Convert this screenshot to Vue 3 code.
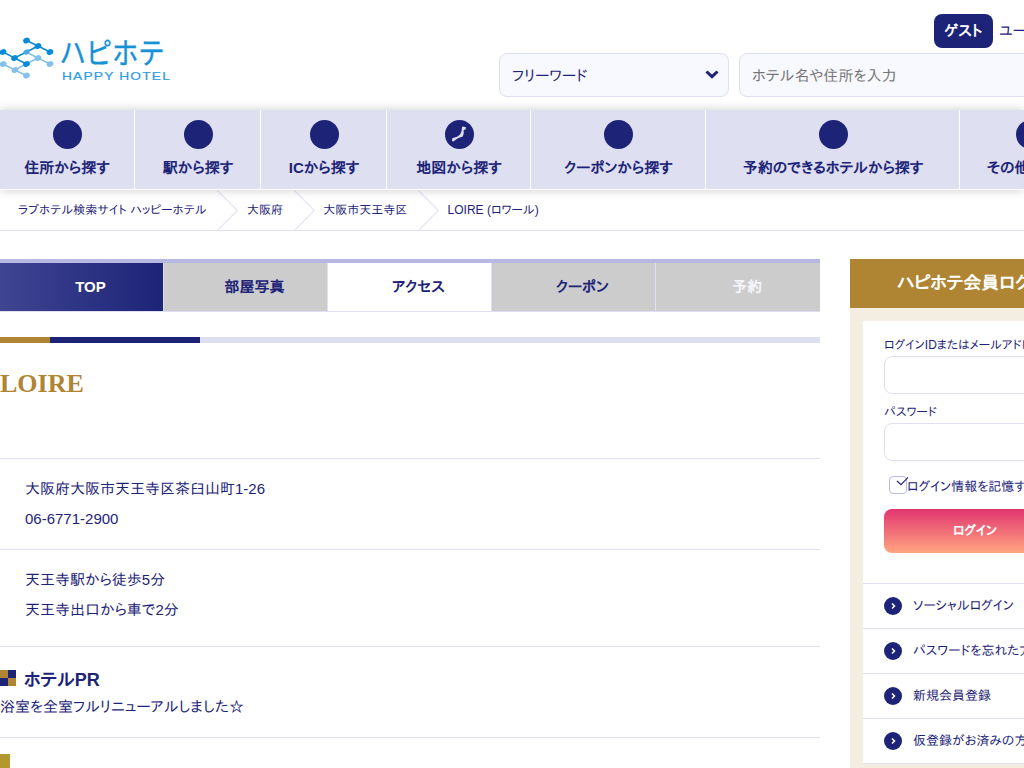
<script setup>
const nav = [
  { label: '住所から探す', w: 135 },
  { label: '駅から探す', w: 126 },
  { label: 'ICから探す', w: 126 },
  { label: '地図から探す', w: 144, map: true },
  { label: 'クーポンから探す', w: 175 },
  { label: '予約のできるホテルから探す', w: 254 },
  { label: 'その他の検索', w: 141 },
]
const crumbs = ['ラブホテル検索サイト ハッピーホテル', '大阪府', '大阪市天王寺区', 'LOIRE (ロワール)']
const tabs = [
  { label: 'TOP', cls: 'current' },
  { label: '部屋写真', cls: 'grey' },
  { label: 'アクセス', cls: 'plain' },
  { label: 'クーポン', cls: 'grey' },
  { label: '予約', cls: 'grey off' },
]
const links = ['ソーシャルログイン', 'パスワードを忘れた方', '新規会員登録', '仮登録がお済みの方']
</script>

<template>
  <div class="page">
    <header class="header">
      <svg class="logo" width="172" height="46" viewBox="0 0 172 46">
        <g stroke="#85c0eb" fill="#85c0eb" stroke-width="1.5">
          <path d="M3 28 L15 34 L27 40 M15 34 L26 28 L38 22 L50 28 M26 16 L38 22" fill="none" />
          <ellipse cx="3.2" cy="28" rx="2.7" ry="2" transform="rotate(-25 3.2 28)" />
          <ellipse cx="15" cy="34" rx="2.7" ry="2" transform="rotate(-25 15 34)" />
          <ellipse cx="26.5" cy="39.5" rx="2.7" ry="2" transform="rotate(-25 26.5 39.5)" />
          <ellipse cx="38" cy="22" rx="2.7" ry="2" transform="rotate(-25 38 22)" />
          <ellipse cx="50" cy="28" rx="2.7" ry="2" transform="rotate(-25 50 28)" />
        </g>
        <g stroke="#078bd8" fill="#078bd8" stroke-width="1.5">
          <path d="M26.5 4.500 L38 10 L50 16 M38 10 L26.5 16 L14.5 22 L3 16 M14.5 22 L26.5 28" fill="none" />
          <ellipse cx="26.5" cy="4.500" rx="2.7" ry="2" transform="rotate(-25 26.5 4.5)" />
          <ellipse cx="38" cy="10" rx="2.7" ry="2" transform="rotate(-25 38 10)" />
          <ellipse cx="50" cy="16" rx="2.7" ry="2" transform="rotate(-25 50 16)" />
          <ellipse cx="3" cy="16" rx="2.7" ry="2" transform="rotate(-25 3 16)" />
          <ellipse cx="14.5" cy="22" rx="2.7" ry="2" transform="rotate(-25 14.5 22)" />
          <ellipse cx="26.5" cy="28" rx="2.7" ry="2" transform="rotate(-25 26.5 28)" />
        </g>
        <ellipse cx="26.5" cy="16" rx="3.2" ry="2.4" fill="#4aa8e3" transform="rotate(-25 26.5 16)" />
        <text class="logo-jp" x="59.500" y="27.500" textLength="105" lengthAdjust="spacingAndGlyphs">ハピホテ</text>
        <text class="logo-en" x="62" y="43.500" textLength="109" lengthAdjust="spacingAndGlyphs">HAPPY HOTEL</text>
      </svg>
      <div class="tools">
        <div class="user"><b class="guest">ゲスト</b><span>ユーザー様</span></div>
        <div class="search">
          <div class="box select">
            <span>フリーワード</span>
            <svg width="14" height="9" viewBox="0 0 14 9"><path d="M1.500 1.500 L7 6.700 L12.500 1.500" fill="none" stroke="#1d2478" stroke-width="3" /></svg>
          </div>
          <div class="box query">ホテル名や住所を入力</div>
        </div>
      </div>
    </header>

    <nav class="nav">
      <a v-for="n in nav" :key="n.label" class="nav-item" :style="{ width: n.w + 'px' }">
        <i class="disc">
          <svg v-if="n.map" width="29" height="29" viewBox="0 0 29 29">
            <path d="M17 7 L18 6.500 L21 7.300 L20.500 9.500 L18.700 10 L18.700 13.500 L17.800 16.500 L13.500 18 L11 19.500 L8.500 21.500 L7 21 L7.300 18.300 L12.500 16.500 L15 14.500 L16.500 11.500 Z" fill="#fff" opacity=".85" />
          </svg>
        </i>
        <span>{{ n.label }}</span>
      </a>
    </nav>

    <div class="crumbs">
      <template v-for="(c, i) in crumbs" :key="c">
        <span>{{ c }}</span>
        <svg v-if="i < 3" class="chev" width="21" height="41" viewBox="0 0 21 41"><path d="M0 0 L20.300 20.500 L0 41" fill="none" stroke="#e6e6f5" stroke-width="1.300" /></svg>
      </template>
    </div>

    <div class="columns">
      <main class="main">
        <div class="tabs">
          <a v-for="t in tabs" :key="t.label" class="tab" :class="t.cls">{{ t.label }}</a>
        </div>
        <div class="stripe"></div>
        <h1>LOIRE</h1>
        <section class="info address"><p>大阪府大阪市天王寺区茶臼山町1-26</p><p>06-6771-2900</p></section>
        <section class="info route"><p>天王寺駅から徒歩5分</p><p>天王寺出口から車で2分</p></section>
        <section class="pr">
          <h2><i class="checker"></i>ホテルPR</h2>
          <p>浴室を全室フルリニューアルしました☆</p>
        </section>
        <section class="next"><i></i></section>
      </main>

      <aside class="side">
        <h3>ハピホテ会員ログイン</h3>
        <div class="panel">
          <div class="form">
            <label>ログインIDまたはメールアドレス</label>
            <div class="field"></div>
            <label class="second">パスワード</label>
            <div class="field"></div>
            <div class="remember">
              <i class="check"><svg width="20" height="18" viewBox="0 0 20 18"><path d="M8 5 L12 8.700 L19 1.300" fill="none" stroke="#1d2478" stroke-width="1.100" /></svg></i>
              <span>ログイン情報を記憶する</span>
            </div>
            <div class="login">ログイン</div>
          </div>
          <a v-for="l in links" :key="l" class="link">
            <svg width="18" height="18" viewBox="0 0 18 18"><circle cx="9" cy="9" r="9" fill="#1d2478" /><path d="M8 6.500 L10.500 9 L8 11.500" fill="none" stroke="#fff" stroke-width="1.500" /></svg>
            <span>{{ l }}</span>
          </a>
        </div>
      </aside>
    </div>
  </div>
</template>

<style>
html, body { margin: 0; overflow: hidden; background: #fff; }
</style>

<style scoped>
* { box-sizing: border-box; }
.page { width: 1024px; height: 768px; overflow: hidden; background: #fff; color: #1d2478; font: 15px/30px "Liberation Sans", "IPAPGothic", "Noto Sans CJK JP", sans-serif; white-space: nowrap; }
p, h1, h2, h3 { margin: 0; }
.header { height: 110px; display: flex; justify-content: space-between; }
.logo { margin-top: 36px; flex: none; overflow: visible; }
.logo-jp { font: 400 29px "Noto Sans CJK JP", sans-serif; fill: #1591d8; stroke: #1591d8; stroke-width: .4; }
.logo-en { font: 11.500px "Liberation Sans", sans-serif; letter-spacing: 1px; fill: #2d9ce0; stroke: #2d9ce0; stroke-width: .2; }
.tools { width: 525px; flex: none; padding-top: 14px; }
.user { display: flex; margin-left: 435px; gap: 6px; line-height: 34px; }
.guest { flex: none; width: 59px; height: 34px; border-radius: 8px; background: #1d2478; color: #fff; text-align: center; }
.search { display: flex; gap: 10px; margin-top: 5px; }
.box { height: 44px; border: 1px solid #dedff1; border-radius: 8px; background: #f8f8ff; line-height: 44px; padding-left: 12px; flex: none; }
.select { width: 230px; display: flex; justify-content: space-between; align-items: center; padding-right: 9px; }
.select span { padding-top: 2px; }
.select svg { margin-top: -1px; }
.query { width: 400px; color: #757575; letter-spacing: .05px; }
.nav { display: flex; height: 80px; position: relative; box-shadow: 0 0 10px rgba(0,0,0,.2); border-bottom: 1px solid #fff; background: #dedff1; }
.nav-item { flex: none; border-right: 1px solid #fff; display: flex; flex-direction: column; align-items: center; padding-top: 10px; font-weight: bold; }
.nav-item:not(:first-child) { padding-left: 1px; }
.disc { width: 29px; height: 29px; border-radius: 50%; background: #1d2478; flex: none; }
.disc svg { display: block; }
.nav-item span { line-height: 20px; margin-top: 9px; }
.crumbs { height: 41px; border-bottom: 1px solid #dedff1; display: flex; padding-left: 18px; font-size: 12px; line-height: 40px; }
.crumbs span:first-child { letter-spacing: .09px; }
.chev { margin: 0 8.500px 0 10.800px; flex: none; }
.columns { display: flex; gap: 30px; margin-top: 28px; }
.main { width: 820px; flex: none; }
.tabs { height: 53px; border-top: 4px solid #b8b9e2; border-bottom: 1px solid #dedff1; display: grid; grid-template-columns: repeat(5, 164px); }
.tab { padding-left: 18px; text-align: center; font-weight: bold; line-height: 47px; border-right: 1px solid #dedff1; }
.tab:last-child { border-right: 0; }
.current { background: linear-gradient(90deg, #3f4591, #1d2478); color: #fff; }
.grey { background: #ccc; }
.off { color: #f5f5fc; }
.stripe { height: 6px; margin-top: 25px; background: linear-gradient(90deg, #af8533 50px, #1d2478 50px 200px, #dedff1 200px); }
h1 { font: bold 26px/40px "Liberation Serif", serif; color: #af8533; margin-top: 21px; height: 94px; }
.info { border-top: 1px solid #dedff1; padding: 15px 0 0 25px; }
.address { height: 91px; }
.route { height: 97px; }
.pr { border-top: 1px solid #dedff1; height: 91px; padding-top: 21px; }
h2 { display: flex; align-items: center; gap: 8px; font-size: 18px; line-height: 24px; }
.checker { width: 16px; height: 16px; margin-top: -4px; background: conic-gradient(#1d2478 25%, #af8533 0 50%, #1d2478 0 75%, #af8533 0); }
.next { border-top: 1px solid #dedff1; padding-top: 16px; }
.next i { display: block; width: 10px; height: 30px; background: #b1982f; }
.side { width: 300px; flex: none; height: 520px; background: #f4ede1; }
h3 { height: 49px; background: #af8533; color: #fff; font-size: 18px; line-height: 48px; padding-left: 47px; }
.panel { margin: 13px 13px 0; background: #fff; }
.form { height: 262px; padding: 15px 21px 0; font-size: 12px; }
label { display: block; line-height: 18px; height: 20px; }
.second { margin-top: 9px; }
.field { height: 38px; border: 1px solid #dedff1; border-radius: 8px; }
.remember { display: flex; align-items: center; height: 20px; margin: 14px 0 0 5px; font-size: 13px; }
.remember span { padding-top: 4px; }
.check { width: 18px; height: 18px; border: 1px solid #b8b9e2; border-radius: 4px; flex: none; }
.check svg { display: block; margin: -1px; }
.login { width: 182px; height: 44px; margin-top: 14px; border-radius: 8px; background: linear-gradient(#e1356f, #ffa681); color: #fff; text-align: center; font-size: 13px; font-weight: bold; line-height: 44px; }
.link { height: 45px; border-top: 1px solid #dedff1; display: flex; align-items: center; gap: 11px; padding-left: 21px; font-size: 13px; line-height: 43px; }
.link span { padding-bottom: 2px; line-height: 41px; }
.link:last-child { border-bottom: 1px solid #dedff1; height: 46px; }
</style>
